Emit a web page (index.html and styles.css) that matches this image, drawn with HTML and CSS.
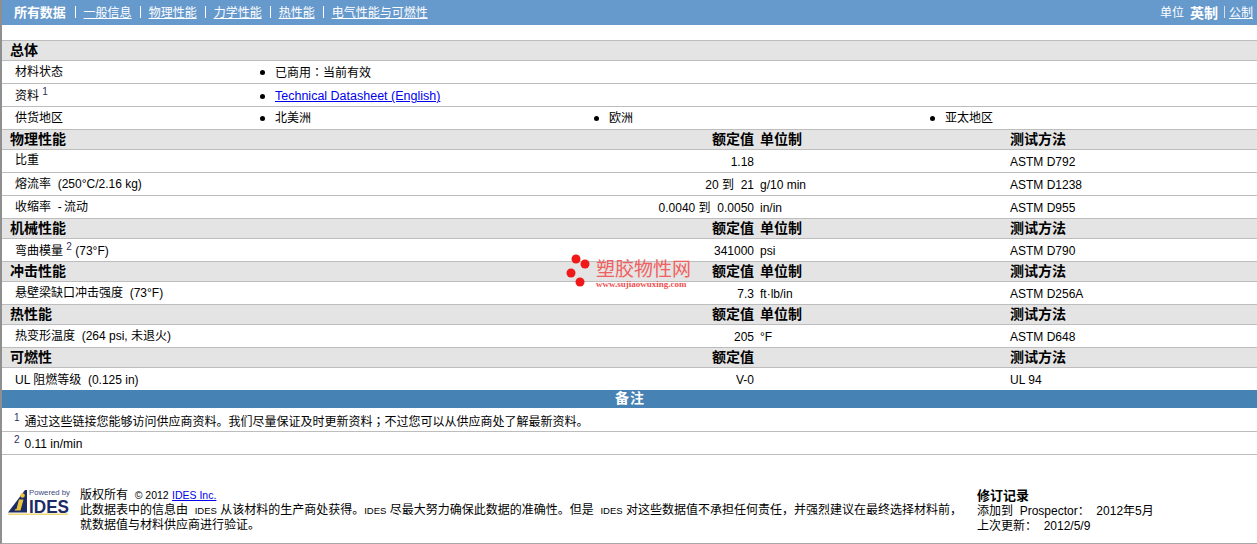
FILE: index.html
```html
<!DOCTYPE html>
<html lang="zh-CN">
<head>
<meta charset="utf-8">
<title>塑胶物性</title>
<link rel="stylesheet" href="styles.css">
</head>
<body>
<div class="page">
  <nav class="topbar">
    <div class="tabs">
      <b class="tab-current">所有数据</b><i class="sep"></i><a href="#">一般信息</a><i class="sep"></i><a href="#">物理性能</a><i class="sep"></i><a href="#">力学性能</a><i class="sep"></i><a href="#">热性能</a><i class="sep"></i><a href="#">电气性能与可燃性</a>
    </div>
    <div class="units"><span>单位</span><b>英制</b><i class="sep small"></i><a href="#">公制</a></div>
  </nav>

  <section class="sheet">
    <div class="head"><b>总体</b></div>
    <div class="row info"><span>材料状态</span><span class="bullet">已商用<span class="mid" lang="zh-Hant">：</span>当前有效</span></div>
    <div class="row info low"><span>资料 <sup>1</sup></span><span class="bullet wide"><a href="#" class="link big">Technical Datasheet (English)</a></span></div>
    <div class="row info"><span>供货地区</span><span class="bullet">北美洲</span><span class="bullet">欧洲</span><span class="bullet">亚太地区</span></div>

    <div class="head data"><b>物理性能</b><b class="val">额定值</b><b>单位制</b><b>测试方法</b></div>
    <div class="row data"><span class="up">比重</span><span class="val">1.18</span><span></span><span>ASTM D792</span></div>
    <div class="row data"><span>熔流率 &nbsp;(250°C/2.16 kg)</span><span class="val">20 到 &nbsp;21</span><span>g/10 min</span><span>ASTM D1238</span></div>
    <div class="row data"><span>收缩率 &nbsp;-&thinsp;流动</span><span class="val">0.0040 到 &nbsp;0.0050</span><span>in/in</span><span>ASTM D955</span></div>

    <div class="head data"><b>机械性能</b><b class="val">额定值</b><b>单位制</b><b>测试方法</b></div>
    <div class="row data"><span class="down">弯曲模量 <sup>2</sup> (73°F)</span><span class="val">341000</span><span>psi</span><span>ASTM D790</span></div>

    <div class="head data"><b>冲击性能</b><b class="val">额定值</b><b>单位制</b><b>测试方法</b></div>
    <div class="row data"><span>悬壁梁缺口冲击强度 &nbsp;(73°F)</span><span class="val">7.3</span><span>ft·lb/in</span><span>ASTM D256A</span></div>

    <div class="head data"><b>热性能</b><b class="val">额定值</b><b>单位制</b><b>测试方法</b></div>
    <div class="row data"><span>热变形温度 &nbsp;(264 psi, 未退火)</span><span class="val">205</span><span>°F</span><span>ASTM D648</span></div>

    <div class="head data"><b>可燃性</b><b class="val">额定值</b><b></b><b>测试方法</b></div>
    <div class="row data"><span class="down">UL 阻燃等级 &nbsp;(0.125 in)</span><span class="val">V-0</span><span></span><span>UL 94</span></div>

    <div class="notes-title">备注</div>
    <div class="note"><sup>1</sup>通过这些链接您能够访问供应商资料。我们尽量保证及时更新资料<span class="mid" lang="zh-Hant">；</span>不过您可以从供应商处了解最新资料。</div>
    <div class="note second"><sup>2</sup>0.11 in/min</div>
  </section>

  <footer class="foot">
    <div class="logo">
      <svg width="64" height="28" viewBox="0 0 64 28" aria-hidden="true">
        <text x="21" y="7" class="logo-small" textLength="41" lengthAdjust="spacingAndGlyphs">Powered by</text>
        <path d="M0 24.500 L17 2 L19 2 L19 24.500 Z" fill="#1c2a66"/>
        <path d="M11 11.500 h4.500 l-3 11 h-6 l1-1.500 h1 z" fill="#e8c33a"/>
        <circle cx="14.500" cy="7.500" r="2.300" fill="#e8c33a"/>
        <text x="21" y="24.500" class="logo-big" textLength="40" lengthAdjust="spacingAndGlyphs">IDES</text>
        <rect x="0" y="25.500" width="60" height="1.500" fill="#f0d878"/>
      </svg>
    </div>
    <div class="legal">
      <div>版权所有 &nbsp;<span class="small">© 2012</span> <a href="#" class="link small">IDES Inc.</a></div>
      <div>此数据表中的信息由 &nbsp;<span class="tiny">IDES</span> 从该材料的生产商处获得。<span class="tiny">IDES</span> 尽最大努力确保此数据的准确性。但是 &nbsp;<span class="tiny">IDES</span> 对这些数据值不承担任何责任，并强烈建议在最终选择材料前，</div>
      <div>就数据值与材料供应商进行验证。</div>
    </div>
    <div class="revision">
      <b>修订记录</b>
      <div>添加到 &nbsp;Prospector： &nbsp;2012年5月</div>
      <div>上次更新： &nbsp;2012/5/9</div>
    </div>
  </footer>

  <div class="watermark">
    <svg width="30" height="36" viewBox="0 0 30 36" aria-hidden="true">
      <circle cx="10" cy="5" r="4.500" fill="#f01818"/>
      <circle cx="19" cy="10" r="4.500" fill="#f01818"/>
      <circle cx="5" cy="19" r="4.500" fill="#f01818"/>
      <circle cx="14" cy="28" r="4.500" fill="#f01818"/>
    </svg>
    <div class="wm-text">
      <div class="wm-cn">塑胶物性网</div>
      <div class="wm-en">www.sujiaowuxing.com</div>
    </div>
  </div>
</div>
</body>
</html>
```

FILE: styles.css
```css
* { box-sizing: border-box; }
html, body { margin: 0; padding: 0; }
body {
  font-family: "Liberation Sans", "Noto Sans CJK SC", Arial, sans-serif;
  font-size: 12px;
  color: #000;
  background: #fff;
}
.page {
  position: relative;
  width: 1257px;
  height: 544px;
  overflow: hidden;
  border-left: 2px solid #8f8f8f;
  border-bottom: 1px solid #a8a8a8;
}
a { color: inherit; }
.link { color: #0000ee; }
.big { font-size: 12.500px; }
.small { font-size: 10.500px; }
.tiny { font-size: 9.500px; }
.mid { font-family: "Noto Sans CJK TC", sans-serif; }
sup { font-size: 10px; line-height: 0; vertical-align: 5px; color: #303060; }

.topbar {
  height: 25px;
  margin-left: -2px;
  padding: 0 4px 2px 14px;
  background: #6699cc;
  color: #fff;
  display: flex;
  justify-content: space-between;
  align-items: center;
}
.tabs, .units { display: flex; align-items: center; }
.tab-current { font-size: 13px; letter-spacing: -0.100px; }
.sep { width: 1px; height: 12px; background: #fff; margin: 0 8px; }
.tab-current + .sep { margin-left: 9px; }
.sep.small { margin: 0 4px 0 6px; background: #dde; }
.units b { margin-left: 6px; font-size: 14px; }

.sheet { margin-top: 15px; }
.head, .row { border-top: 1px solid #bdbdbd; }
.head {
  height: 20px;
  padding-left: 8px;
  background: #e4e4e4;
  font-size: 14px;
  line-height: 18px;
}
.row { height: 23px; line-height: 22px; padding-left: 13px; }
.data { display: grid; align-items: start; }
.head.data { grid-template-columns: 500px 244px 256px 1fr; }
.row.data { grid-template-columns: 500px 239px 256px 1fr; }
.data > :nth-child(3) { padding-left: 6px; }
.val { text-align: right; }
.row.data > :not(:first-child) { padding-top: 1px; }
.up { margin-top: -1px; }
.down { margin-top: 1px; }

.row.info { display: grid; grid-template-columns: 245px 334px 336px 1fr; }
.row.low { line-height: 25px; }
.bullet { position: relative; padding-left: 15px; }
.bullet::before {
  content: "";
  position: absolute;
  left: 0;
  top: 9px;
  width: 5px;
  height: 5px;
  border-radius: 50%;
  background: #000;
}
.row.low .bullet::before { top: 10px; }
.bullet.wide { grid-column: 2 / -1; }

.notes-title {
  height: 18px;
  margin: 0 0 1px -2px;
  padding-left: 3px;
  background: #4682b4;
  color: #fff;
  text-align: center;
  font-weight: bold;
  font-size: 14px;
  letter-spacing: 1px;
  line-height: 16px;
}
.note {
  height: 23px;
  padding-left: 12px;
  border-bottom: 1px solid #bdbdbd;
  line-height: 24px;
}
.note.second { line-height: 25px; }
.note sup { margin-right: 5px; }

.foot {
  display: grid;
  grid-template-columns: 72px 897px 1fr;
  margin-top: 33px;
  padding-left: 6px;
  line-height: 15px;
}
.legal > div { white-space: nowrap; }
.logo-small { font-family: "Liberation Sans", sans-serif; font-size: 8px; fill: #3a4a80; }
.logo-big { font-family: "Liberation Sans", sans-serif; font-size: 19px; font-weight: bold; fill: #1c2a66; }
.revision b { font-size: 13px; }

.watermark {
  position: absolute;
  left: 564px;
  top: 254px;
  display: flex;
}
.wm-cn { font-size: 19px; line-height: 20px; color: #f06060; margin-top: 6px; white-space: nowrap; }
.wm-en { font-family: "Liberation Serif", serif; font-size: 9px; line-height: 8px; font-weight: bold; color: #f05050; white-space: nowrap; }
```
